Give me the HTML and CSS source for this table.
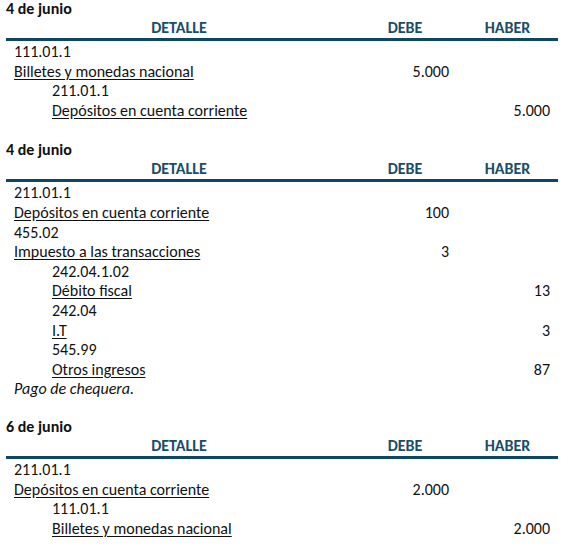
FILE: index.html
```html
<!DOCTYPE html>
<html lang="es">
<head>
<meta charset="utf-8">
<link rel="stylesheet" href="styles.css">
</head>
<body>
<div class="page">
  <section class="entry">
    <div class="title">4 de junio</div>
    <div class="row head"><div class="c-det">DETALLE</div><div class="c-debe">DEBE</div><div class="c-haber">HABER</div></div>
    <div class="row"><div class="c-det l1">111.01.1</div><div class="c-debe"></div><div class="c-haber"></div></div>
    <div class="row"><div class="c-det l1"><u>Billetes y monedas nacional</u></div><div class="c-debe">5.000</div><div class="c-haber"></div></div>
    <div class="row"><div class="c-det l2">211.01.1</div><div class="c-debe"></div><div class="c-haber"></div></div>
    <div class="row"><div class="c-det l2"><u>Depósitos en cuenta corriente</u></div><div class="c-debe"></div><div class="c-haber">5.000</div></div>
  </section>

  <section class="entry">
    <div class="title">4 de junio</div>
    <div class="row head"><div class="c-det">DETALLE</div><div class="c-debe">DEBE</div><div class="c-haber">HABER</div></div>
    <div class="row"><div class="c-det l1">211.01.1</div><div class="c-debe"></div><div class="c-haber"></div></div>
    <div class="row"><div class="c-det l1"><u>Depósitos en cuenta corriente</u></div><div class="c-debe">100</div><div class="c-haber"></div></div>
    <div class="row"><div class="c-det l1">455.02</div><div class="c-debe"></div><div class="c-haber"></div></div>
    <div class="row"><div class="c-det l1"><u>Impuesto a las transacciones</u></div><div class="c-debe">3</div><div class="c-haber"></div></div>
    <div class="row"><div class="c-det l2">242.04.1.02</div><div class="c-debe"></div><div class="c-haber"></div></div>
    <div class="row"><div class="c-det l2"><u>Débito fiscal</u></div><div class="c-debe"></div><div class="c-haber">13</div></div>
    <div class="row"><div class="c-det l2">242.04</div><div class="c-debe"></div><div class="c-haber"></div></div>
    <div class="row"><div class="c-det l2"><u>I.T</u></div><div class="c-debe"></div><div class="c-haber">3</div></div>
    <div class="row"><div class="c-det l2">545.99</div><div class="c-debe"></div><div class="c-haber"></div></div>
    <div class="row"><div class="c-det l2"><u>Otros ingresos</u></div><div class="c-debe"></div><div class="c-haber">87</div></div>
    <div class="row"><div class="c-det l1 note">Pago de chequera.</div><div class="c-debe"></div><div class="c-haber"></div></div>
  </section>

  <section class="entry entry-tight">
    <div class="title">6 de junio</div>
    <div class="row head"><div class="c-det">DETALLE</div><div class="c-debe">DEBE</div><div class="c-haber">HABER</div></div>
    <div class="row"><div class="c-det l1">211.01.1</div><div class="c-debe"></div><div class="c-haber"></div></div>
    <div class="row"><div class="c-det l1"><u>Depósitos en cuenta corriente</u></div><div class="c-debe">2.000</div><div class="c-haber"></div></div>
    <div class="row"><div class="c-det l2">111.01.1</div><div class="c-debe"></div><div class="c-haber"></div></div>
    <div class="row"><div class="c-det l2"><u>Billetes y monedas nacional</u></div><div class="c-debe"></div><div class="c-haber">2.000</div></div>
  </section>
</div>
</body>
</html>
```

FILE: styles.css
```css
html, body {
  margin: 0;
  padding: 0;
  background: #ffffff;
}
body {
  font-family: Carlito, Calibri, Lato, "Liberation Sans", sans-serif;
  font-size: 16px;
  color: #111111;
}
.page {
  width: 552px;
  margin-left: 6px;
  display: flex;
  flex-direction: column;
  gap: 22px;
}
.entry {
  display: flex;
  flex-direction: column;
}
.entry-tight {
  margin-top: -2px;
}
.title {
  height: 18px;
  line-height: 18px;
  font-size: 16px;
  font-weight: bold;
}
.row {
  display: grid;
  grid-template-columns: 346px 106px 99px;
  height: 19.6px;
  line-height: 19.6px;
}
.row > div {
  padding-top: 1px;
}
.row.head {
  height: 20px;
  line-height: 20px;
  border-bottom: 3px solid #0f4661;
  color: #1a4c68;
  font-weight: bold;
  font-size: 16px;
}
.row.head > div {
  text-align: center;
  padding: 0;
}
.c-det {
  white-space: nowrap;
}
.c-debe {
  text-align: right;
  padding-right: 9px;
}
.c-haber {
  text-align: right;
  padding-right: 7px;
}
.l1 {
  padding-left: 8px;
}
.l2 {
  padding-left: 46px;
}
.note {
  font-style: italic;
}
u {
  text-underline-offset: 2px;
}
```
